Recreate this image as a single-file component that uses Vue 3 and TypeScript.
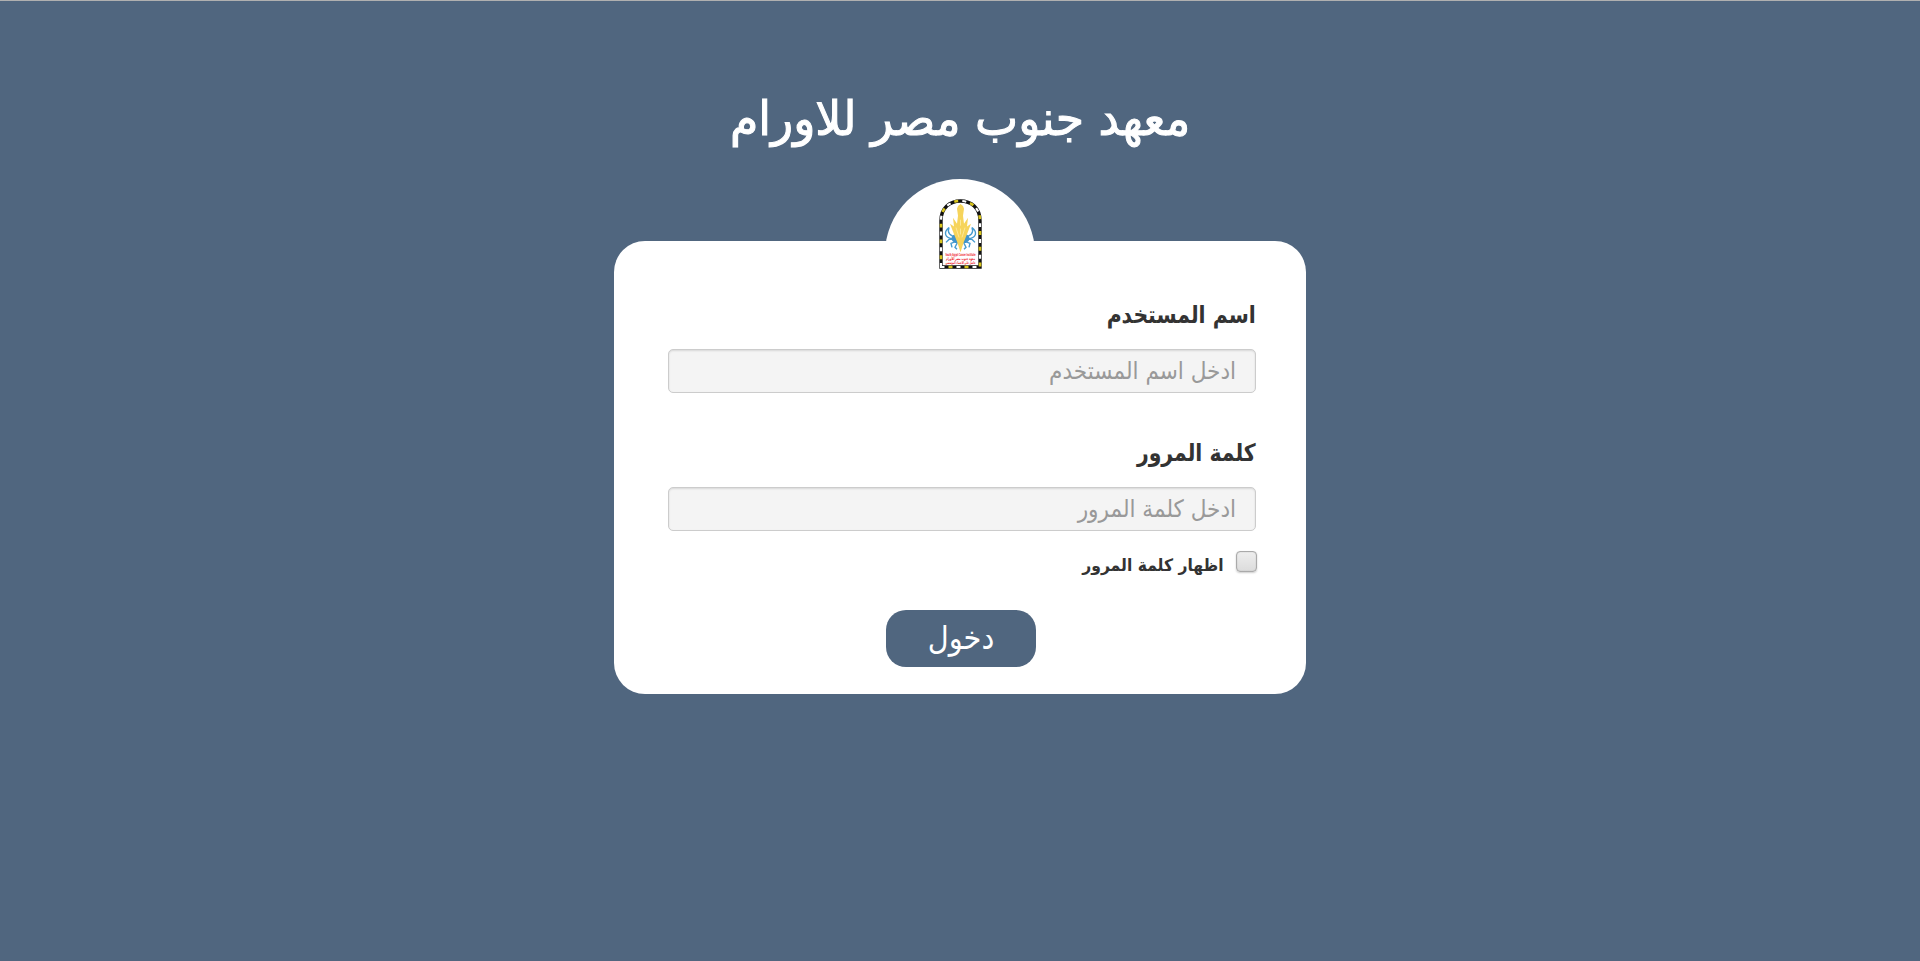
<script setup lang="ts">
import { ref } from 'vue'

const username = ref('')
const password = ref('')
const showPassword = ref(false)
</script>

<template>
  <main class="page" dir="rtl" lang="ar">
    <h1 class="title"><span>معهد جنوب مصر للاورام</span></h1>
    <form class="card" @submit.prevent>
      <div class="badge">
        <svg class="logo" viewBox="0 0 43 71" preserveAspectRatio="none" aria-hidden="true">
          <path class="frame" d="M2 69V22C2 9 11 2 21.500 2S41 9 41 22V69Z" />
          <path class="white" d="M2 69V22C2 9 11 2 21.500 2S41 9 41 22V69Z" />
          <path class="gold" d="M2 69V22C2 9 11 2 21.500 2S41 9 41 22V69Z" />
          <path class="crab" d="M17 38c-6 0-9-4-7-9-6 5-4 11 4 11M26 38c6 0 9-4 7-9 6 5 4 11-4 11M16 41h-6l-3 3M27 41h6l3 3M17 43l-5 2 1 4M26 43l5 2-1 4M18 45l-2 4 2 2M25 45l2 4-2 2" />
          <ellipse cx="21.500" cy="40" rx="9" ry="5.500" fill="#3f93cb" />
          <path class="flower" d="M21.500 54 18 43 15.500 37 11 25l4 3-1-9 4 6 1-8-1-7 1-3 2.500-2L24 7l1 3-1 7 1 8 4-6-1 9 4-3-4.500 12L25 43Z" />
          <path d="m17 29 3 10m6-10-3 10m-1.500-18v6m0 3v6" fill="none" stroke="#fff0b2" stroke-width=".7" />
          <text x="21.500" y="58" textLength="30" lengthAdjust="spacingAndGlyphs" class="logo-text latin">South Egypt Cancer Institute</text>
          <text x="21.500" y="62" textLength="29" lengthAdjust="spacingAndGlyphs" class="logo-text">معهد جنوب مصر للأورام</text>
          <text x="21.500" y="66" textLength="30" lengthAdjust="spacingAndGlyphs" class="logo-text">حاصل على الاعتماد المؤسسي</text>
        </svg>
      </div>
      <label class="label" for="username"><span>اسم المستخدم</span></label>
      <input id="username" v-model="username" class="field" type="text" placeholder="ادخل اسم المستخدم" />
      <label class="label second" for="password"><span>كلمة المرور</span></label>
      <input id="password" v-model="password" class="field" :type="showPassword ? 'text' : 'password'" placeholder="ادخل كلمة المرور" />
      <label class="show">
        <input v-model="showPassword" class="check" type="checkbox" />
        <span>اظهار كلمة المرور</span>
      </label>
      <button class="submit" type="submit"><span>دخول</span></button>
    </form>
  </main>
</template>

<style>
body { margin: 0; background: #50667f; }
</style>

<style scoped>
.page {
  box-sizing: border-box;
  height: 961px;
  overflow: hidden;
  border-top: 1px solid #b0b0b0;
  background: #50667f;
  font-family: "DejaVu Sans Condensed", "DejaVu Sans", sans-serif;
  font-stretch: condensed;
}
.title {
  height: 80px;
  margin: 77px 0 0;
  color: #fff;
  font-size: 48px;
  font-weight: 400;
  line-height: 80px;
  text-align: center;
  -webkit-text-stroke: 1px #fff;
}
.title span, .label span, .show span { display: inline-block; white-space: nowrap; }
.title span { transform: scaleX(1.06); }
.label span { transform: scaleX(.945); transform-origin: right; }
.show span { transform: scaleX(1.02); transform-origin: right; }
.card {
  box-sizing: border-box;
  display: flex;
  flex-direction: column;
  width: 692px;
  height: 453px;
  margin: 83.400px auto 0;
  padding: 0 50px 0 54px;
  border-radius: 31px;
  background: #fff;
}
.badge {
  display: flex;
  flex: none;
  justify-content: center;
  width: 150px;
  height: 150px;
  margin: -62.400px 221px -100px 0;
  border-radius: 50%;
  background: #fff;
}
.logo { width: 43px; height: 70px; margin-top: 20px; overflow: visible; }
.frame, .white, .gold { fill: none; stroke-width: 3.400; }
.frame { stroke: #111; }
.white { stroke: #fff; stroke-width: 2.200; stroke-dasharray: 4 12; }
.gold { stroke: #d9c51d; stroke-width: 2.600; stroke-dasharray: 4 12; stroke-dashoffset: -8; }
.crab { fill: none; stroke: #469bd0; stroke-width: 1.400; }
.flower { fill: #f6d45b; }
.logo-text { fill: #ee1b2d; font: 700 4px "DejaVu Sans", sans-serif; text-anchor: middle; }
.latin { direction: ltr; }
.label {
  height: 44px;
  margin-top: 63.600px;
  color: #333;
  font-size: 24px;
  font-weight: 700;
  line-height: 44px;
}
.field {
  box-sizing: border-box;
  flex: none;
  width: 588px;
  height: 44.500px;
  margin: 12px 0 0;
  padding: 0 19px;
  border: 1px solid #ccc;
  border-radius: 5px;
  outline: 0;
  background: #f4f4f4;
  box-shadow: inset 0 1px 2px rgb(0 0 0 / 12%);
  color: #333;
  font: 24px "DejaVu Sans Condensed", "DejaVu Sans", sans-serif;
  font-stretch: condensed;
}
.field::placeholder { color: #999; opacity: 1; }
.second { margin-top: 37.500px; }
.show {
  display: flex;
  height: 30px;
  margin: 19px -1px 0 0;
  color: #333;
  font-size: 17px;
  font-weight: 700;
  line-height: 30px;
}
.check {
  appearance: none;
  box-sizing: border-box;
  width: 21px;
  height: 21px;
  margin: 1px 0 0 12px;
  border: 1px solid #aaa;
  border-radius: 4px;
  background: linear-gradient(#eee, #dcdcdc);
  box-shadow: inset 0 0 1px #999, 0 1px 2px rgb(0 0 0 / 20%);
}
.submit {
  width: 150px;
  height: 56.500px;
  margin: 30px 220px 0 0;
  padding: 0;
  border: 0;
  border-radius: 20px;
  background: #50667f;
  color: #fff;
  font: 32px/57px "DejaVu Sans Condensed", "DejaVu Sans", sans-serif;
}
</style>
